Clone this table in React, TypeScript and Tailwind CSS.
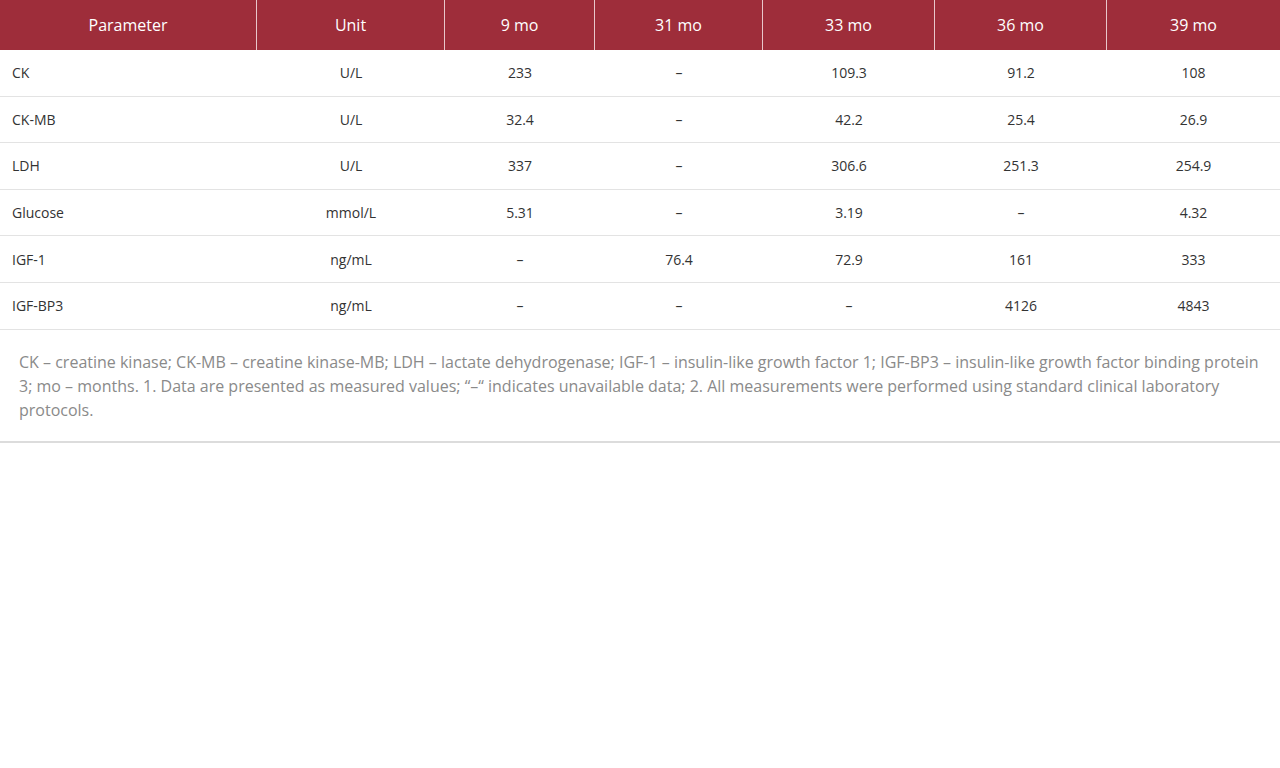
import React from 'react';

const cols = ['Parameter', 'Unit', '9 mo', '31 mo', '33 mo', '36 mo', '39 mo'];

const rows: string[][] = [
  ['CK', 'U/L', '233', '–', '109.3', '91.2', '108'],
  ['CK-MB', 'U/L', '32.4', '–', '42.2', '25.4', '26.9'],
  ['LDH', 'U/L', '337', '–', '306.6', '251.3', '254.9'],
  ['Glucose', 'mmol/L', '5.31', '–', '3.19', '–', '4.32'],
  ['IGF-1', 'ng/mL', '–', '76.4', '72.9', '161', '333'],
  ['IGF-BP3', 'ng/mL', '–', '–', '–', '4126', '4843'],
];

const grid = 'grid grid-cols-[257px_188px_150px_168px_172px_172px_173px]';

export default function App() {
  return (
    <div
      className="min-h-screen bg-white text-[#333]"
      style={{ fontFamily: '"Open Sans", "Liberation Sans", sans-serif' }}
    >
      <div className={`${grid} h-[50px] bg-[#9e2d3a] text-white text-[16px]`}>
        {cols.map((c, i) => (
          <div
            key={c}
            className={`flex items-center justify-center ${i < cols.length - 1 ? 'border-r border-[#e9c7cb]' : ''}`}
          >
            {c}
          </div>
        ))}
      </div>
      {rows.map((r) => (
        <div key={r[0]} className={`${grid} h-[46.6px] border-b border-[#e3e3e3] text-[14px]`}>
          {r.map((v, i) => (
            <div
              key={i}
              className={`flex items-center ${i === 0 ? 'pl-3' : 'justify-center'}`}
            >
              {v}
            </div>
          ))}
        </div>
      ))}
      <div className="px-[19px] pt-[20px] pb-[19px] border-b-2 border-[#dcdcdc] text-[16px] leading-6 text-[#8a8a8a]">
        CK – creatine kinase; CK-MB – creatine kinase-MB; LDH – lactate dehydrogenase; IGF-1 – insulin-like growth factor 1; IGF-BP3 – insulin-like growth factor binding protein 3; mo – months. 1. Data are presented as measured values; “–“ indicates unavailable data; 2. All measurements were performed using standard clinical laboratory protocols.
      </div>
    </div>
  );
}
